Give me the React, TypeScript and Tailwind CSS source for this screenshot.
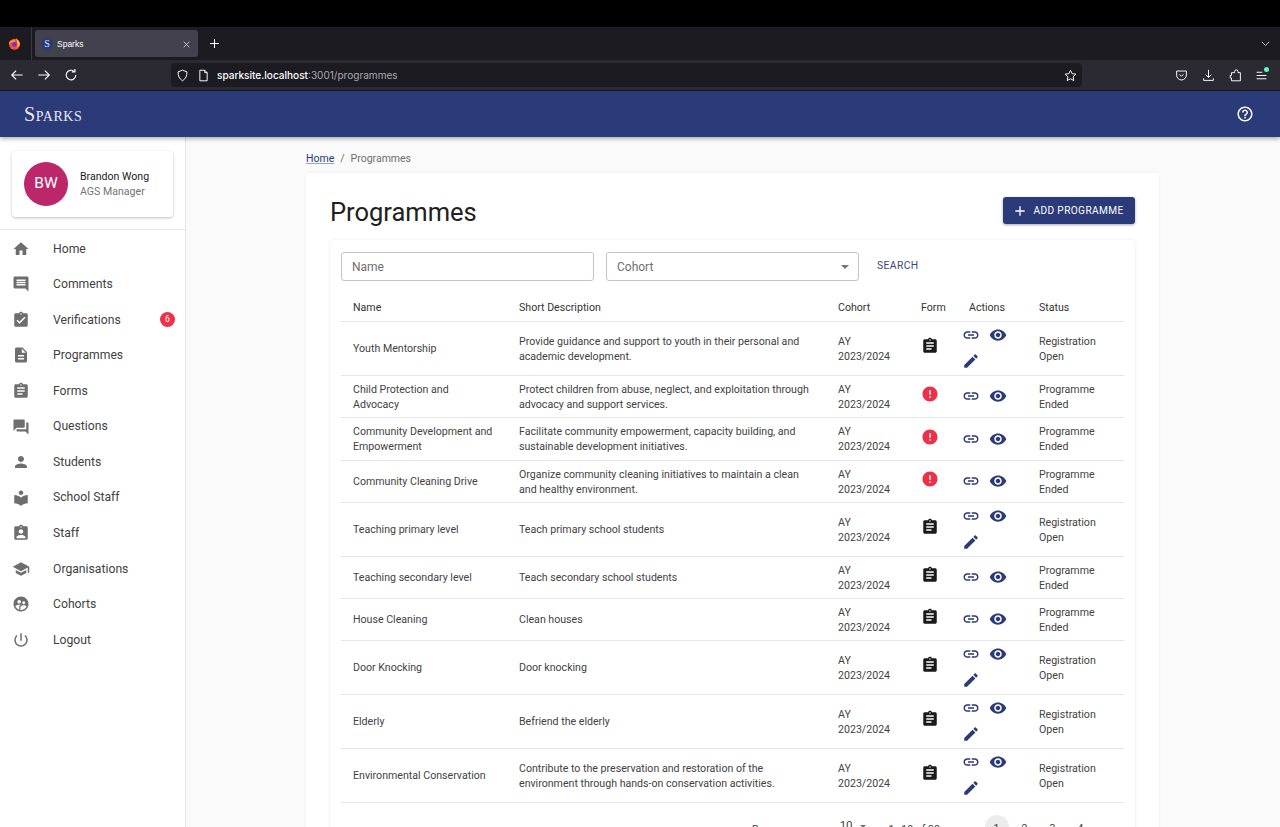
import React from "react";

const P: Record<string, string> = {
  home: "M10 20v-6h4v6h5v-8h3L12 3 2 12h3v8z",
  comment: "M21.99 4c0-1.1-.89-2-1.99-2H4c-1.1 0-2 .9-2 2v12c0 1.1.9 2 2 2h14l4 4-.01-18zM18 14H6v-2h12v2zm0-3H6V9h12v2zm0-3H6V6h12v2z",
  verify: "M19 3h-4.18C14.4 1.84 13.3 1 12 1c-1.3 0-2.4.84-2.82 2H5c-1.1 0-2 .9-2 2v14c0 1.1.9 2 2 2h14c1.1 0 2-.9 2-2V5c0-1.1-.9-2-2-2zm-7 0c.55 0 1 .45 1 1s-.45 1-1 1-1-.45-1-1 .45-1 1-1zm-2 14-4-4 1.41-1.41L10 14.17l6.59-6.59L18 9l-8 8z",
  desc: "M14 2H6c-1.1 0-1.99.9-1.99 2L4 20c0 1.1.89 2 1.99 2H18c1.1 0 2-.9 2-2V8l-6-6zm2 16H8v-2h8v2zm0-4H8v-2h8v2zm-3-5V3.5L18.5 9H13z",
  assign: "M19 3h-4.18C14.4 1.84 13.3 1 12 1c-1.3 0-2.4.84-2.82 2H5c-1.1 0-2 .9-2 2v14c0 1.1.9 2 2 2h14c1.1 0 2-.9 2-2V5c0-1.1-.9-2-2-2zm-7 0c.55 0 1 .45 1 1s-.45 1-1 1-1-.45-1-1 .45-1 1-1zm2 14H7v-2h7v2zm3-4H7v-2h10v2zm0-4H7V7h10v2z",
  qa: "M21 6h-2v9H6v2c0 .55.45 1 1 1h11l4 4V7c0-.55-.45-1-1-1zm-4 6V3c0-.55-.45-1-1-1H3c-.55 0-1 .45-1 1v14l4-4h10c.55 0 1-.45 1-1z",
  person: "M12 12c2.21 0 4-1.79 4-4s-1.79-4-4-4-4 1.79-4 4 1.79 4 4 4zm0 2c-2.67 0-8 1.34-8 4v2h16v-2c0-2.66-5.33-4-8-4z",
  library: "M12 11.55C9.64 9.35 6.48 8 3 8v11c3.48 0 6.64 1.35 9 3.55 2.36-2.19 5.52-3.55 9-3.55V8c-3.48 0-6.64 1.35-9 3.55zM12 8c1.66 0 3-1.34 3-3s-1.34-3-3-3-3 1.34-3 3 1.34 3 3 3z",
  ind: "M19 3h-4.18C14.4 1.84 13.3 1 12 1c-1.3 0-2.4.84-2.82 2H5c-1.1 0-2 .9-2 2v14c0 1.1.9 2 2 2h14c1.1 0 2-.9 2-2V5c0-1.1-.9-2-2-2zm-7 0c.55 0 1 .45 1 1s-.45 1-1 1-1-.45-1-1 .45-1 1-1zm0 4c1.66 0 3 1.34 3 3s-1.34 3-3 3-3-1.34-3-3 1.34-3 3-3zm6 12H6v-1.4c0-2 4-3.1 6-3.1s6 1.1 6 3.1V19z",
  school: "M5 13.18v4L12 21l7-3.82v-4L12 17l-7-3.82zM12 3 1 9l11 6 9-4.91V17h2V9L12 3z",
  cohort: "M11.99 2c-5.52 0-10 4.48-10 10s4.48 10 10 10 10-4.48 10-10-4.48-10-10-10zm3.61 6.34c1.07 0 1.93.86 1.93 1.93 0 1.07-.86 1.93-1.93 1.93-1.07 0-1.93-.86-1.93-1.93-.01-1.07.86-1.93 1.93-1.93zm-6-1.58c1.3 0 2.36 1.06 2.36 2.36 0 1.3-1.06 2.36-2.36 2.36s-2.36-1.06-2.36-2.36c0-1.31 1.05-2.36 2.36-2.36zm0 9.13v3.75c-2.4-.75-4.3-2.6-5.14-4.96 1.05-1.12 3.67-1.69 5.14-1.69.53 0 1.2.08 1.9.22-1.64.87-1.9 2.02-1.9 2.68zM11.99 20c-.27 0-.53-.01-.79-.04v-4.07c0-1.42 2.94-2.13 4.4-2.13 1.07 0 2.92.39 3.84 1.15-1.17 2.97-4.06 5.09-7.45 5.09z",
  power: "M13 3h-2v10h2V3zm4.83 2.17l-1.42 1.42C17.99 7.86 19 9.81 19 12c0 3.87-3.13 7-7 7s-7-3.13-7-7c0-2.19 1.01-4.14 2.58-5.42L6.17 5.17C4.23 6.82 3 9.26 3 12c0 4.97 4.03 9 9 9s9-4.03 9-9c0-2.74-1.23-5.18-3.17-6.83z",
  link: "M3.9 12c0-1.71 1.39-3.1 3.1-3.1h4V7H7c-2.76 0-5 2.24-5 5s2.24 5 5 5h4v-1.9H7c-1.71 0-3.1-1.39-3.1-3.1zM8 13h8v-2H8v2zm9-6h-4v1.9h4c1.71 0 3.1 1.39 3.1 3.1s-1.39 3.1-3.1 3.1h-4V17h4c2.76 0 5-2.24 5-5s-2.24-5-5-5z",
  eye: "M12 4.5C7 4.5 2.73 7.61 1 12c1.73 4.39 6 7.5 11 7.5s9.27-3.11 11-7.5c-1.73-4.39-6-7.5-11-7.5zM12 17c-2.76 0-5-2.24-5-5s2.24-5 5-5 5 2.24 5 5-2.24 5-5 5zm0-8c-1.66 0-3 1.34-3 3s1.34 3 3 3 3-1.34 3-3-1.34-3-3-3z",
  edit: "M3 17.25V21h3.75L17.81 9.94l-3.75-3.75L3 17.25zM20.71 7.04c.39-.39.39-1.02 0-1.41l-2.34-2.34a.9959.9959 0 0 0-1.41 0l-1.83 1.83 3.75 3.75 1.83-1.83z",
  error: "M12 2C6.48 2 2 6.48 2 12s4.48 10 10 10 10-4.48 10-10S17.52 2 12 2zm1 15h-2v-2h2v2zm0-4h-2V7h2v6z",
  help: "M11 18h2v-2h-2v2zm1-16C6.48 2 2 6.48 2 12s4.48 10 10 10 10-4.48 10-10S17.52 2 12 2zm0 18c-4.41 0-8-3.59-8-8s3.59-8 8-8 8 3.59 8 8-3.59 8-8 8zm0-14c-2.21 0-4 1.79-4 4h2c0-1.1.9-2 2-2s2 .9 2 2c0 2-3 1.75-3 5h2c0-2.25 3-2.5 3-5 0-2.21-1.79-4-4-4z",
  add: "M19 13h-6v6h-2v-6H5v-2h6V5h2v6h6v2z",
};

function I({ n, className }: { n: string; className?: string }) {
  return (
    <svg viewBox="0 0 24 24" className={className} fill="currentColor">
      <path d={P[n]} />
    </svg>
  );
}

const nav: [string, string][] = [
  ["home", "Home"], ["comment", "Comments"], ["verify", "Verifications"], ["desc", "Programmes"],
  ["assign", "Forms"], ["qa", "Questions"], ["person", "Students"], ["library", "School Staff"],
  ["ind", "Staff"], ["school", "Organisations"], ["cohort", "Cohorts"], ["power", "Logout"],
];

type Row = { name: string; desc: string; bad?: boolean; edit?: boolean; status: string[]; h: string };
const REG = ["Registration", "Open"];
const END = ["Programme", "Ended"];
const rows: Row[] = [
  { name: "Youth Mentorship", desc: "Provide guidance and support to youth in their personal and academic development.", edit: true, status: REG, h: "h-[54px]" },
  { name: "Child Protection and Advocacy", desc: "Protect children from abuse, neglect, and exploitation through advocacy and support services.", bad: true, status: END, h: "h-[42px]" },
  { name: "Community Development and Empowerment", desc: "Facilitate community empowerment, capacity building, and sustainable development initiatives.", bad: true, status: END, h: "h-[43px]" },
  { name: "Community Cleaning Drive", desc: "Organize community cleaning initiatives to maintain a clean and healthy environment.", bad: true, status: END, h: "h-[42px]" },
  { name: "Teaching primary level", desc: "Teach primary school students", edit: true, status: REG, h: "h-[54px]" },
  { name: "Teaching secondary level", desc: "Teach secondary school students", status: END, h: "h-[42px]" },
  { name: "House Cleaning", desc: "Clean houses", status: END, h: "h-[42px]" },
  { name: "Door Knocking", desc: "Door knocking", edit: true, status: REG, h: "h-[54px]" },
  { name: "Elderly", desc: "Befriend the elderly", edit: true, status: REG, h: "h-[54px]" },
  { name: "Environmental Conservation", desc: "Contribute to the preservation and restoration of the environment through hands-on conservation activities.", edit: true, status: REG, h: "h-[54px]" },
];

function Chrome() {
  return (
    <div className="shrink-0 font-['Inter',sans-serif]">
      <div className="h-[27px] bg-black" />
      <div className="flex h-[33px] items-center bg-[#1c1b22]">
        <div className="flex h-full w-[32px] items-center justify-center border-r border-[#3a3942] pr-[3px]">
          <svg viewBox="0 0 16 16" className="h-[13px] w-[13px]">
            <circle cx="8" cy="9" r="6.8" fill="#f0503c" />
            <path d="M9.500.8c1 1.700 3.900 3.200 5 6.200.5 3-1.500 5.500-4.500 6C13 10 11.500 6 9.500.8z" fill="#ffbd2e" />
            <path d="M2.500 4.500C1.500 6 1.200 7.500 1.200 9 3 6.500 6 5.500 8.500 6c.5-1-.5-2.500-1.500-3C6.500 4.500 4 4.500 2.500 4.500z" fill="#ff9a2e" />
            <circle cx="8" cy="9.300" r="3" fill="#7b2fc9" />
          </svg>
        </div>
        <div className="ml-[3px] flex h-[27px] w-[163px] items-center rounded-[3px] bg-[#42414d] pl-[6px] pr-[8px] pt-[1px]">
          <span className="flex h-[12px] w-[12px] items-center justify-center rounded-full bg-[#2b3b7a] font-['Liberation_Serif',serif] text-[10px] leading-none text-[#dfe3f5]">S</span>
          <span className="ml-[4px] flex-1 font-['Liberation_Sans',sans-serif] text-[8.500px] text-[#fbfbfe]">Sparks</span>
          <svg viewBox="0 0 10 10" className="h-[7px] w-[7px]" stroke="#d8d8de" strokeWidth="1.2"><path d="M1 1l8 8M9 1l-8 8" /></svg>
        </div>
        <svg viewBox="0 0 10 10" className="ml-[12px] h-[9px] w-[9px]" stroke="#fbfbfe" strokeWidth="1.2"><path d="M5 0v10M0 5h10" /></svg>
        <svg viewBox="0 0 12 8" className="ml-auto mr-[10px] h-[6px] w-[9px]" fill="none" stroke="#e0e0e6" strokeWidth="1.1"><path d="M1 1l5 5 5-5" /></svg>
      </div>
      <div className="flex h-[30px] items-center bg-[#2b2a33] text-[#fbfbfe]">
        <svg viewBox="0 0 16 16" className="ml-[10px] h-[14px] w-[14px]" fill="none" stroke="currentColor" strokeWidth="1.3"><path d="M14.500 8H2M7 3L2 8l5 5" /></svg>
        <svg viewBox="0 0 16 16" className="ml-[13px] h-[14px] w-[14px]" fill="none" stroke="currentColor" strokeWidth="1.3"><path d="M1.500 8H14M9 3l5 5-5 5" /></svg>
        <svg viewBox="0 0 16 16" className="ml-[13px] h-[14px] w-[14px]" fill="none" stroke="currentColor" strokeWidth="1.3"><path d="M13.500 8A5.500 5.500 0 1 1 11.500 3.800M12.500 1v3.500H9" /></svg>
        <div className="ml-[93px] flex h-[24px] w-[911px] items-center rounded-[4px] bg-[#1c1b22] pl-[5px] pr-[5px]">
          <svg viewBox="0 0 16 16" className="h-[13px] w-[13px]" fill="none" stroke="currentColor" strokeWidth="1.200"><path d="M8 1.500l5.500 2c0 5-1.500 8.500-5.500 11-4-2.500-5.500-6-5.500-11z" /></svg>
          <svg viewBox="0 0 16 16" className="ml-[8px] h-[13px] w-[13px]" fill="none" stroke="currentColor" strokeWidth="1.200"><path d="M3.500 1.500h6l3 3v10h-9zM9.500 1.500v3h3" /></svg>
          <span className="ml-[7px] text-[10.050px] font-medium leading-none text-[#fbfbfe]">sparksite.localhost<span className="font-normal text-[#a8a8b0]">:3001/programmes</span></span>
          <svg viewBox="0 0 16 16" className="ml-auto h-[13px] w-[13px]" fill="none" stroke="currentColor" strokeWidth="1.2"><path d="M8 1.500l2 4.300 4.700.6-3.500 3.200.9 4.700L8 12l-4.100 2.300.9-4.700L1.300 6.400 6 5.800z" /></svg>
        </div>
        <svg viewBox="0 0 16 16" className="ml-[93px] h-[13px] w-[13px]" fill="none" stroke="currentColor" strokeWidth="1.200"><path d="M2 2.500h12v5a6 6 0 0 1-12 0zM5.500 6.500L8 9l2.500-2.500" /></svg>
        <svg viewBox="0 0 16 16" className="ml-[14px] h-[13px] w-[13px]" fill="none" stroke="currentColor" strokeWidth="1.200"><path d="M8 1v9M4.500 7L8 10.500 11.500 7M2 11.500V14h12v-2.500" /></svg>
        <svg viewBox="0 0 16 16" className="ml-[14px] h-[13px] w-[13px]" fill="none" stroke="currentColor" strokeWidth="1.200"><path d="M7 4.500V3a2 2 0 0 1 4 0v1.500h3v10H3v-3.500H1.500V8H3V4.500z" /></svg>
        <div className="relative ml-[13px] h-[13px] w-[13px]">
          <svg viewBox="0 0 16 16" className="h-[13px] w-[13px]" fill="none" stroke="currentColor" strokeWidth="1.200"><path d="M2 4h7M2 8h12M2 12h12" /></svg>
          <span className="absolute -top-[2px] right-[-1px] h-[5px] w-[5px] rounded-full bg-[#54ffbd]" />
        </div>
      </div>
      <div className="h-px bg-[#16151b]" />
    </div>
  );
}

export default function App() {
  return (
    <div className="flex h-[827px] w-[1280px] flex-col overflow-hidden bg-[#fafafa] font-['Roboto',sans-serif] text-[#212121]">
      <Chrome />
      <header className="relative z-10 flex h-[46px] shrink-0 items-center justify-between bg-[#2b3a78] pl-[24px] pr-[26px] shadow-[0_2px_4px_rgba(0,0,0,0.3)]">
        <span className="font-['Liberation_Serif',serif] text-[20px] tracking-[0.55px] text-white/90 [font-variant:small-caps]">Sparks</span>
        <I n="help" className="h-[18px] w-[18px] text-white" />
      </header>
      <div className="flex min-h-0 flex-1">
        <aside className="w-[186px] shrink-0 border-r border-[#e6e6e6] bg-white">
          <div className="border-b border-[#e6e6e6] px-[12px] pb-[12px] pt-[14px]">
            <div className="flex h-[66px] w-[161px] items-center rounded-[4px] bg-white pl-[12px] shadow-[0_1px_3px_rgba(0,0,0,0.25)]">
              <div className="flex h-[44px] w-[44px] items-center justify-center rounded-full bg-[#bb2769] text-[15.500px] text-white">BW</div>
              <div className="ml-[12px] text-[10.600px] leading-[15px]">
                <div className="text-[#212121]">Brandon Wong</div>
                <div className="text-[#757575]">AGS Manager</div>
              </div>
            </div>
          </div>
          <nav className="pt-[1px]">
            {nav.map(([ic, label]) => (
              <div key={label} className="flex h-[35.560px] items-center pl-[11.500px] pr-[10px]">
                <I n={ic} className="h-[18px] w-[18px] text-[#6e6e6e]" />
                <span className="ml-[23.500px] flex-1 text-[12.200px] text-[#424242]">{label}</span>
                {label === "Verifications" && (
                  <span className="flex h-[15px] w-[15px] items-center justify-center rounded-full bg-[#ee3048] text-[8.500px] text-white">6</span>
                )}
              </div>
            ))}
          </nav>
        </aside>
        <main className="min-w-0 flex-1 pl-[120px]">
          <div className="flex h-[36px] items-center pt-[7px] text-[10.500px] text-[#6f6f6f]">
            <span className="text-[#2b3a78] underline decoration-[#9aa3c6]">Home</span>
            <span className="mx-[6px]">/</span>
            <span>Programmes</span>
          </div>
          <section className="h-[700px] w-[853px] rounded-[4px] bg-white px-[24px] shadow-[0_0_3px_rgba(0,0,0,0.06)]">
            <div className="flex h-[67px] items-start justify-between pt-[24px]">
              <h1 className="text-[25.500px] font-normal leading-[30px] text-[#212121]">Programmes</h1>
              <button className="flex h-[27px] w-[132px] items-center justify-center rounded-[3px] bg-[#2b3a78] pr-[2px] text-[10.100px] font-normal tracking-[0.4px] text-white shadow-[0_1px_3px_rgba(0,0,0,0.35)]">
                <I n="add" className="mr-[5px] h-[16px] w-[16px]" />
                ADD PROGRAMME
              </button>
            </div>
            <div className="rounded-[4px] bg-white px-[11px] pt-[12px] shadow-[0_0_3px_rgba(0,0,0,0.1)]">
              <div className="flex items-start">
                <div className="flex h-[29px] w-[253px] items-center rounded-[3px] border border-[#c4c4c4] px-[10px] pt-[1px] text-[12px] text-[#6f6f6f]">Name</div>
                <div className="ml-[12px] flex h-[29px] w-[253px] items-center justify-between rounded-[3px] border border-[#c4c4c4] pl-[10px] pr-[9px] pt-[1px] text-[12px] text-[#6f6f6f]">
                  Cohort
                  <span className="h-0 w-0 border-x-[4px] border-t-[4px] border-x-transparent border-t-[#757575]" />
                </div>
                <span className="ml-[18px] mt-[6px] text-[10.300px] font-normal tracking-[0.4px] text-[#3a4885]">SEARCH</span>
              </div>
              <table className="mt-[13px] w-[783px] table-fixed border-collapse text-left text-[10.620px] leading-[15px] text-[#424242]">
                <colgroup>
                  <col className="w-[166px]" />
                  <col className="w-[319px]" />
                  <col className="w-[83px]" />
                  <col className="w-[48px]" />
                  <col className="w-[70px]" />
                  <col className="w-[97px]" />
                </colgroup>
                <thead>
                  <tr className="h-[27px] border-b border-[#e6e6e6] text-[#333]">
                    <th className="pl-[12px] font-normal">Name</th>
                    <th className="pl-[12px] font-normal">Short Description</th>
                    <th className="pl-[12px] font-normal">Cohort</th>
                    <th className="pl-[12px] font-normal">Form</th>
                    <th className="pl-[12px] font-normal">Actions</th>
                    <th className="pl-[12px] font-normal">Status</th>
                  </tr>
                </thead>
                <tbody>
                  {rows.map((r) => (
                    <tr key={r.name} className={`${r.h} border-b border-[#e6e6e6]`}>
                      <td className="pl-[12px] pr-[12px] pt-[1px]">{r.name}</td>
                      <td className="pl-[12px] pr-[12px] pt-[1px]">{r.desc}</td>
                      <td className="pl-[12px] pt-[1px]">AY<br />2023/2024</td>
                      <td className="pb-[4px] pl-[12px]">
                        {r.bad ? <I n="error" className="h-[18px] w-[18px] text-[#ee3048]" /> : <I n="assign" className="h-[18px] w-[18px] text-[#1a1a1a]" />}
                      </td>
                      <td>
                        <div className="flex w-[54px] flex-wrap text-[#2b3a78]">
                          <span className="flex h-[26.500px] w-[27px] items-center justify-center"><I n="link" className="h-[18px] w-[18px]" /></span>
                          <span className="flex h-[26.500px] w-[27px] items-center justify-center"><I n="eye" className="h-[18px] w-[18px]" /></span>
                          {r.edit && <span className="flex h-[26.500px] w-[27px] items-center justify-center"><I n="edit" className="h-[18px] w-[18px]" /></span>}
                        </div>
                      </td>
                      <td className="pl-[12px] pt-[1px]">{r.status[0]}<br />{r.status[1]}</td>
                    </tr>
                  ))}
                </tbody>
              </table>
              <div className="flex h-[48px] items-start pt-[12px] text-[10.500px] leading-[30px] text-[#424242]">
                <span className="ml-[411px]">Rows per page:</span>
                <span className="ml-[16px] text-[11.500px] leading-[20px]">10</span>
                <span className="ml-[7px] mt-[10px] h-0 w-0 border-x-[3px] border-t-[3px] border-x-transparent border-t-[#757575]" />
                <span className="ml-[23px] w-[54px]">1–10 of 38</span>
                <span className="ml-[13px] flex h-[24px] w-[24px] justify-center pt-[7px] text-[16px] leading-none text-[#bdbdbd]">‹</span>
                <span className="ml-[5px] flex h-[24px] w-[24px] items-center justify-center rounded-full bg-[#ececec] pt-[6px] leading-none">1</span>
                <span className="ml-[4px] flex h-[24px] w-[24px] items-center justify-center pt-[6px] leading-none">2</span>
                <span className="ml-[4px] flex h-[24px] w-[24px] items-center justify-center pt-[6px] leading-none">3</span>
                <span className="ml-[4px] flex h-[24px] w-[24px] items-center justify-center pt-[6px] leading-none">4</span>
                <span className="ml-[5px] flex h-[24px] w-[24px] justify-center pt-[7px] text-[16px] leading-none">›</span>
              </div>
            </div>
          </section>
        </main>
      </div>
    </div>
  );
}
